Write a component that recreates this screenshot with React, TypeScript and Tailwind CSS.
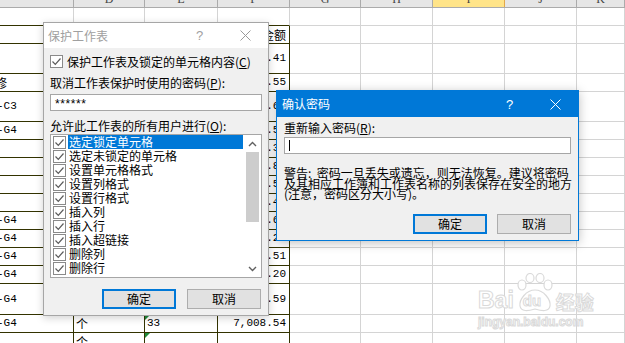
import React from 'react';

type Row = { h: string; c?: string; cOff?: string; d?: string; e?: string; f?: string; tri?: boolean };

const rows: Row[] = [
  { h: 'h-[18px]' },
  { h: 'h-[18px]', d: '单位', e: '数量', f: '金额' },
  { h: 'h-[30px]', f: '1,236.41' },
  { h: 'h-[18px]', c: '修', cOff: '-ml-[5px]', f: '155.55' },
  { h: 'h-[30px]', c: '-C3', f: '2,318.60' },
  { h: 'h-[18px]', c: '-G4', f: '86.50' },
  { h: 'h-[18px]', f: '412.30' },
  { h: 'h-[18px]', f: '98.80' },
  { h: 'h-[18px]', f: '327.50' },
  { h: 'h-[18px]', f: '64.40' },
  { h: 'h-[18px]', c: '-G4', f: '519.60' },
  { h: 'h-[18px]', c: '-G4', f: '73.20' },
  { h: 'h-[18px]', c: '-G4', f: '245.51' },
  { h: 'h-[18px]', c: '-G4', f: '180.20' },
  { h: 'h-[31px]', c: '-G4', f: '1,092.59' },
  { h: 'h-[18px]', c: '-G4', d: '个', e: '33', f: '7,008.54', tri: true },
  { h: 'h-[18px]', d: '个', tri: true },
];

const widths = ['w-[74px]', 'w-[71px]', 'w-[73px]', 'w-[72px]', 'w-[71px]', 'w-[72px]', 'w-[72px]', 'w-[72px]', 'flex-1'];
const letters = ['', 'D', 'E', 'F', 'G', 'H', 'I', 'J', 'K'];

const cjk = "font-['Noto_Sans_CJK_SC',sans-serif]";
const mono = "font-['Liberation_Mono',monospace]";

const items = [
  '选定锁定单元格',
  '选定未锁定的单元格',
  '设置单元格格式',
  '设置列格式',
  '设置行格式',
  '插入列',
  '插入行',
  '插入超链接',
  '删除列',
  '删除行',
];

const Check: React.FC = () => (
  <span className="w-[13px] h-[13px] shrink-0 border border-[#8a8a8a] bg-white flex items-center justify-center">
    <svg width="11" height="11" viewBox="0 0 11 11">
      <path d="M1.5 5.5 L4.3 8.3 L9.5 2.5" stroke="#5c5c5c" strokeWidth="1.2" fill="none" />
    </svg>
  </span>
);

const Close: React.FC<{ color: string }> = ({ color }) => (
  <svg width="11" height="11" viewBox="0 0 11 11">
    <path d="M0.5 0.5 L10.5 10.5 M10.5 0.5 L0.5 10.5" stroke={color} strokeWidth="1" />
  </svg>
);

const Chevron: React.FC<{ up?: boolean }> = ({ up }) => (
  <svg width="9" height="6" viewBox="0 0 9 6">
    <path d={up ? 'M1 5 L4.5 1.5 L8 5' : 'M1 1 L4.5 4.5 L8 1'} stroke="#606060" strokeWidth="1.4" fill="none" />
  </svg>
);

const Sheet: React.FC = () => (
  <div className="flex flex-col">
    <div className="h-[8px] flex border-b border-[#ababab] bg-[#e6e6e6]">
      {letters.map((l, i) => (
        <div
          key={i}
          className={`${widths[i]} h-full flex justify-center items-end overflow-hidden border-r ${
            l === 'I' ? 'bg-[#ffe489] border-[#e2a84a]' : 'border-[#ababab]'
          }`}
        >
          <span className="leading-none mb-[2px] text-[12px] text-[#444] font-['Liberation_Serif',serif]">{l}</span>
        </div>
      ))}
    </div>
    {rows.map((r, ri) => (
      <div key={ri} className={`${r.h} flex`}>
        {widths.map((w, ci) => {
          const inTable = ci < 4;
          const bClass = inTable
            ? ri === 0
              ? 'border-r border-r-[#d4d4d4] border-b border-b-[#333300]'
              : 'border-r border-b border-[#333300]'
            : 'border-r border-b border-[#d4d4d4]';
          return (
            <div key={ci} className={`${w} relative flex items-center overflow-hidden ${bClass}`}>
              {ci === 0 && r.c && (
                <span className={`${r.c === '修' ? cjk + ' text-[12px]' : mono + ' text-[11px]'} ${r.cOff ?? '-ml-[3px]'} whitespace-nowrap text-black`}>
                  {r.c}
                </span>
              )}
              {ci === 1 && r.d && <span className={`${cjk} text-[12px] pl-[2px] text-black`}>{r.d}</span>}
              {ci === 2 && r.e && <span className={`${mono} text-[11px] pl-[2px] text-black`}>{r.e}</span>}
              {ci === 2 && r.tri && (
                <span className="absolute left-0 top-0 w-0 h-0 border-t-[5px] border-t-[#1f8a3b] border-r-[5px] border-r-transparent" />
              )}
              {ci === 3 && r.f && (
                <span
                  className={`${/[0-9]/.test(r.f) ? mono + ' text-[11px]' : cjk + ' text-[12px]'} ml-auto pr-[3px] whitespace-nowrap text-black`}
                >
                  {r.f}
                </span>
              )}
            </div>
          );
        })}
      </div>
    ))}
  </div>
);

const Watermark: React.FC = () => (
  <div className="absolute left-[478px] top-[273px] w-[118px] h-[60px] select-none">
    <div className="flex items-end h-[40px]">
      <span className="text-[23px] font-bold leading-none mb-[1px] text-white [-webkit-text-stroke:1px_#dadada] font-['Liberation_Sans',sans-serif]">
        Bai
      </span>
      <div className="relative w-[42px] h-[40px]">
        <svg width="42" height="40" viewBox="0 0 42 40" className="absolute left-0 top-0">
          <g fill="#fff" stroke="#dadada" strokeWidth="1.2">
            <ellipse cx="8" cy="12" rx="4" ry="5" />
            <ellipse cx="16" cy="5" rx="4" ry="4.5" />
            <ellipse cx="26" cy="5" rx="4" ry="4.5" />
            <ellipse cx="34" cy="12" rx="4" ry="5" />
            <path d="M21 17 C30 17 37 27 36 33 C35 39 28 38 21 36 C14 38 7 39 6 33 C5 27 12 17 21 17 Z" />
          </g>
        </svg>
        <span className="absolute left-[9px] top-[20px] text-[15px] font-bold leading-none text-white [-webkit-text-stroke:1px_#dadada] font-['Liberation_Sans',sans-serif]">
          du
        </span>
      </div>
      <span className={`${cjk} text-[19px] font-bold leading-none mb-[2px] text-white [-webkit-text-stroke:1px_#dadada]`}>经验</span>
    </div>
    <div className="text-[12px] font-bold leading-none mt-[3px] text-white [-webkit-text-stroke:1px_#dadada] font-['Liberation_Sans',sans-serif]">
      jingyan.baidu.com
    </div>
  </div>
);

const ProtectDialog: React.FC = () => (
  <div className={`absolute left-[43px] top-[22px] w-[226px] h-[294px] border border-[#a6a6a6] bg-[#f0f0f0] shadow-[0_2px_8px_rgba(0,0,0,0.18)] flex flex-col ${cjk} text-[12px] text-black`}>
    <div className="h-[25px] shrink-0 bg-white flex items-center">
      <span className="flex-1 pl-[4px] text-[#a0a0a0] leading-none">保护工作表</span>
      <span className="w-[45px] text-center text-[#a0a0a0] text-[13px] leading-none font-['Liberation_Sans',sans-serif]">?</span>
      <span className="w-[46px] flex justify-center">
        <Close color="#9a9a9a" />
      </span>
    </div>
    <div className="flex-1 px-[6px] flex flex-col">
      <div className="mt-[7px] h-[13px] flex items-center gap-[4px] leading-none">
        <Check />
        <span className="whitespace-nowrap">
          保护工作表及锁定的单元格内容(<u>C</u>)
        </span>
      </div>
      <div className="mt-[8px] leading-[14px] whitespace-nowrap">
        取消工作表保护时使用的密码(<u>P</u>):
      </div>
      <div className="mt-[4px] h-[17px] border border-[#a6a6a6] bg-white flex items-center pl-[4px]">
        <span className="font-['Liberation_Sans',sans-serif] text-[12px] tracking-[0.6px] leading-none pt-[3px]">******</span>
      </div>
      <div className="mt-[8px] leading-[14px] whitespace-nowrap">
        允许此工作表的所有用户进行(<u>O</u>):
      </div>
      <div className="mt-[1px] h-[144px] border border-[#a6a6a6] bg-white flex">
        <div className="flex-1 flex flex-col">
          {items.map((it, i) => (
            <div key={it} className="h-[14px] flex items-center">
              <span className="ml-[2px]">
                <Check />
              </span>
              <span
                className={`ml-[2px] mr-[1px] flex-1 h-[14px] pl-[1px] leading-[14px] whitespace-nowrap ${
                  i === 0 ? 'bg-[#0078d7] text-white' : ''
                }`}
              >
                {it}
              </span>
            </div>
          ))}
        </div>
        <div className="w-[17px] flex flex-col">
          <div className="h-[17px] flex items-center justify-center">
            <Chevron up />
          </div>
          <div className="flex-1">
            <div className="mx-[2px] h-[70px] bg-[#cdcdcd]" />
          </div>
          <div className="h-[17px] flex items-center justify-center">
            <Chevron />
          </div>
        </div>
      </div>
      <div className="mt-[11px] flex justify-end gap-[11px] pr-[1px]">
        <button className="w-[74px] h-[20px] border-2 border-[#0078d7] bg-[#e1e1e1] leading-none">确定</button>
        <button className="w-[74px] h-[20px] border border-[#adadad] bg-[#e1e1e1] leading-none">取消</button>
      </div>
    </div>
  </div>
);

const ConfirmDialog: React.FC = () => (
  <div className={`absolute left-[276px] top-[90px] w-[303px] h-[151px] border border-[#0078d7] bg-[#f0f0f0] shadow-[0_2px_10px_rgba(0,0,0,0.25)] flex flex-col ${cjk} text-[12px] text-black`}>
    <div className="h-[26px] shrink-0 bg-[#0078d7] flex items-center text-white">
      <span className="flex-1 pl-[5px] leading-none">确认密码</span>
      <span className="w-[45px] text-center text-[13px] leading-none font-['Liberation_Sans',sans-serif]">?</span>
      <span className="w-[46px] flex justify-center">
        <Close color="#ffffff" />
      </span>
    </div>
    <div className="flex-1 px-[7px] pb-[6px] flex flex-col">
      <div className="mt-[4px] leading-[14px] whitespace-nowrap">
        重新输入密码(<u>R</u>):
      </div>
      <div className="mt-[2px] h-[17px] border border-[#a6a6a6] bg-white flex items-center">
        <span className="ml-[4px] w-[1px] h-[11px] bg-black" />
      </div>
      <div className="mt-[14px] leading-[10.5px] whitespace-nowrap">
        警告:&nbsp;&nbsp;密码一旦丢失或遗忘，则无法恢复。建议将密码
        <br />
        及其相应工作簿和工作表名称的列表保存在安全的地方
        <br />
        (注意，密码区分大小写)。
      </div>
      <div className="mt-auto flex justify-end gap-[10px]">
        <button className="w-[74px] h-[20px] border-2 border-[#0078d7] bg-[#e1e1e1] leading-none">确定</button>
        <button className="w-[74px] h-[20px] border border-[#adadad] bg-[#e1e1e1] leading-none">取消</button>
      </div>
    </div>
  </div>
);

const App: React.FC = () => {
  return (
    <div className="relative w-[625px] h-[343px] overflow-hidden bg-white">
      <Sheet />
      <Watermark />
      <ProtectDialog />
      <ConfirmDialog />
    </div>
  );
};

export default App;
